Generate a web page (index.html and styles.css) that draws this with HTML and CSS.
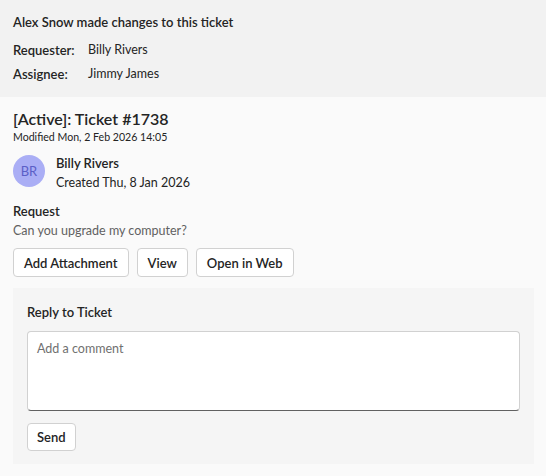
FILE: index.html
```html
<!DOCTYPE html>
<html>
<head>
<meta charset="utf-8">
<link rel="stylesheet" href="styles.css">
</head>
<body>
<div class="page">
  <section class="summary">
    <div class="summary-title">Alex Snow made changes to this ticket</div>
    <div class="facts">
      <div class="fact-label">Requester:</div><div class="fact-value">Billy Rivers</div>
      <div class="fact-label">Assignee:</div><div class="fact-value">Jimmy James</div>
    </div>
  </section>
  <section class="ticket">
    <div class="ticket-title">[Active]: Ticket #1738</div>
    <div class="ticket-modified">Modified Mon, 2 Feb 2026 14:05</div>
    <div class="person">
      <div class="avatar">BR</div>
      <div class="person-info">
        <div class="person-name">Billy Rivers</div>
        <div class="person-created">Created Thu, 8 Jan 2026</div>
      </div>
    </div>
    <div class="request">
      <div class="request-label">Request</div>
      <div class="request-text">Can you upgrade my computer?</div>
    </div>
    <div class="actions">
      <button class="btn">Add Attachment</button>
      <button class="btn">View</button>
      <button class="btn">Open in Web</button>
    </div>
    <div class="reply">
      <div class="reply-title">Reply to Ticket</div>
      <div class="comment">Add a comment</div>
      <div class="reply-actions">
        <button class="btn btn-send">Send</button>
      </div>
    </div>
  </section>
</div>
</body>
</html>
```
FILE: styles.css
```css
* { box-sizing: border-box; }
html, body { margin: 0; padding: 0; }
body {
  width: 546px;
  height: 476px;
  background: #fafafa;
  font-family: Lato, "Noto Sans", sans-serif;
  color: #242424;
  font-size: 12.5px;
  overflow: hidden;
}
.summary {
  background: #f2f2f2;
  height: 97px;
  padding: 12px 13px 0;
}
.summary-title {
  font-size: 13px;
  line-height: 20px;
  margin-bottom: 8px;
  font-weight: 600;
}
.facts {
  display: grid;
  grid-template-columns: 75px auto;
  row-gap: 4px;
  line-height: 20px;
}
.fact-label { font-weight: 600; font-size: 13px; }
.ticket {
  padding: 11px 13px 0;
}
.ticket-title {
  font-size: 16px;
  font-weight: 600;
  line-height: 22px;
}
.ticket-modified {
  font-size: 10.6px;
  line-height: 14px;
}
.person {
  display: flex;
  gap: 11px;
  margin-top: 11px;
}
.avatar {
  width: 32px;
  height: 32px;
  border-radius: 50%;
  background: #aaaef5;
  color: #5b5fc7;
  font-size: 13px;
  display: flex;
  align-items: center;
  justify-content: center;
}
.person-info { line-height: 19px; margin-top: -1px; }
.person-name { font-weight: 600; font-size: 13px; }
.request {
  margin-top: 10px;
  line-height: 19px;
}
.request-label { font-weight: 600; font-size: 13px; }
.request-text { color: #616161; }
.actions {
  display: flex;
  gap: 8px;
  margin-top: 8px;
}
.btn {
  font-family: inherit;
  font-size: 13px;
  font-weight: 600;
  color: #242424;
  background: #ffffff;
  border: 1px solid #d1d1d1;
  border-radius: 4px;
  height: 29px;
  padding: 0 10px;
}
.reply {
  background: #f5f5f5;
  margin-top: 11px;
  padding: 14px 14px 13px;
  width: 521px;
}
.reply-title {
  font-weight: 600;
  font-size: 13px;
  line-height: 20px;
}
.comment {
  margin-top: 9px;
  height: 80px;
  background: #fff;
  border: 1px solid #d1d1d1;
  border-bottom-color: #616161;
  border-radius: 4px;
  color: #707070;
  padding: 7px 9px;
  line-height: 20px;
}
.reply-actions {
  margin-top: 12px;
  display: flex;
}
.btn-send { height: 28px; padding: 0 9px; }
```
